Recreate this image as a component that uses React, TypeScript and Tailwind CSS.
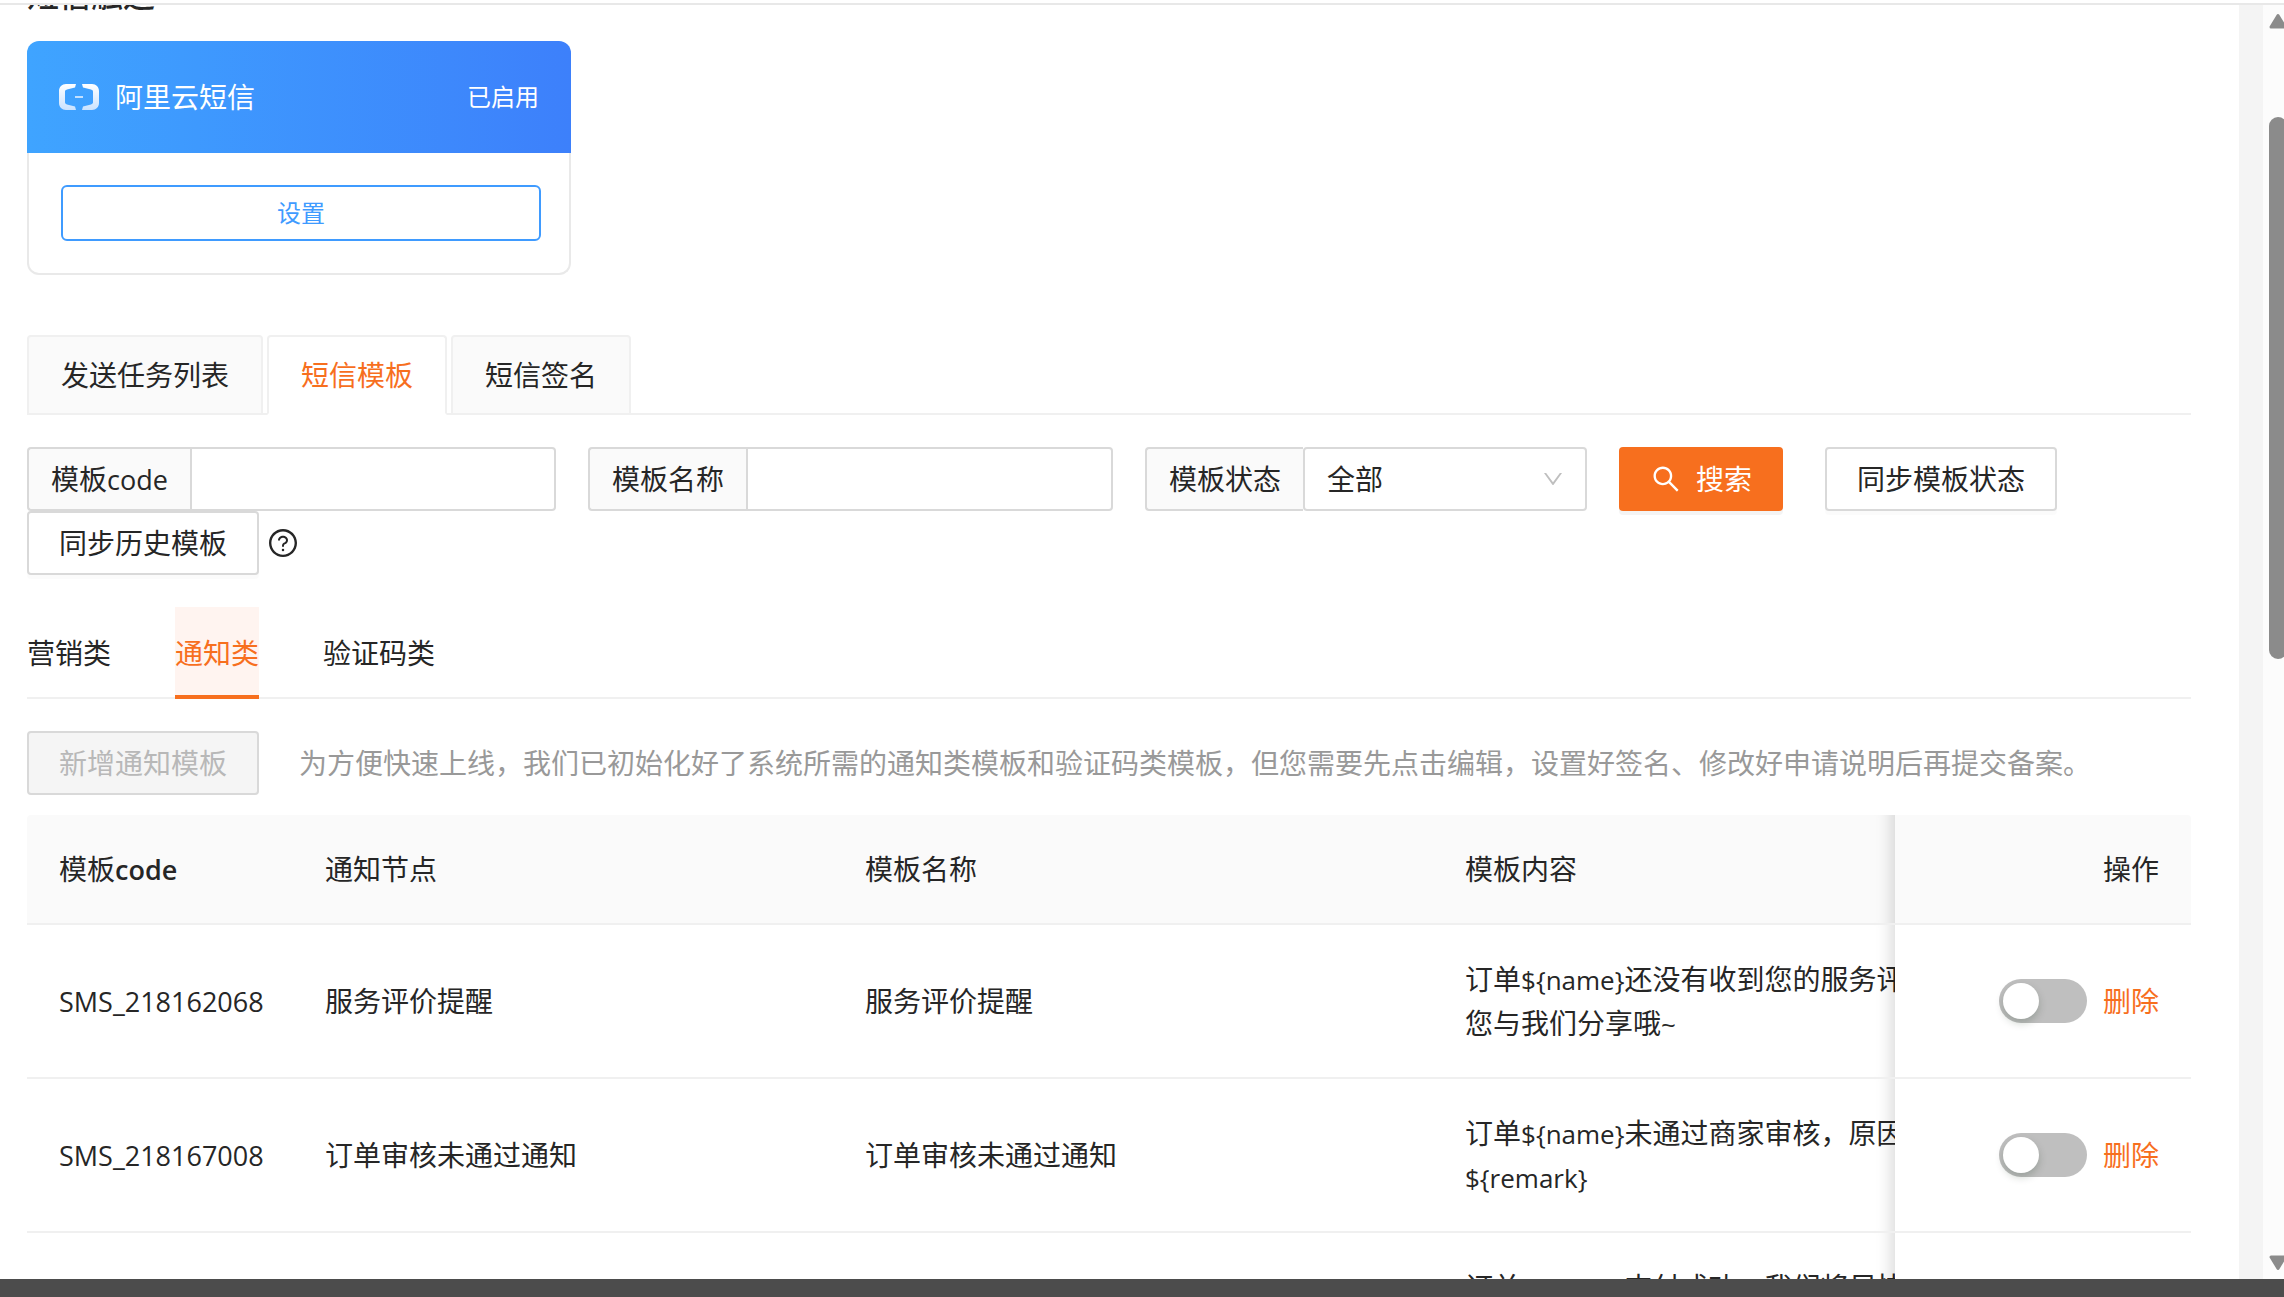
import type { ReactNode } from "react";
import { AiOutlineDown, AiOutlineQuestionCircle, AiOutlineSearch } from "react-icons/ai";

const rows: { code: string; node: string; content: ReactNode }[] = [
  {
    code: "SMS_218162068",
    node: "服务评价提醒",
    content: <>订单<Latin>{"${name}"}</Latin>还没有收到您的服务评价，期待您与我们分享哦<Latin>~</Latin></>,
  },
  {
    code: "SMS_218167008",
    node: "订单审核未通过通知",
    content: <>订单<Latin>{"${name}"}</Latin>未通过商家审核，原因：<Latin>{"${remark}"}</Latin></>,
  },
  {
    code: "SMS_218172031",
    node: "订单支付成功通知",
    content: <>订单<Latin>{"${name}"}</Latin>支付成功，我们将尽快为您安排发货，请您耐心等待</>,
  },
];

function Latin({ children }: { children: ReactNode }) {
  return <span className="text-[26px] leading-none">{children}</span>;
}

function Code({ children }: { children: ReactNode }) {
  return <span className="text-[27px] leading-none">{children}</span>;
}

function AliyunLogo() {
  return (
    <svg width="40" height="26" viewBox="0 0 40 26" aria-hidden="true">
      <defs>
        <linearGradient id="logo-fill" x1="0" y1="0" x2="0" y2="1">
          <stop offset="0" stopColor="#fff" />
          <stop offset="1" stopColor="#c9e2ff" />
        </linearGradient>
      </defs>
      <path
        fill="url(#logo-fill)"
        d="M17 0H7C3 0 0 3 0 7v12c0 4 3 7 7 7h10l-1-3.500-8-2C6.500 20 6 19.500 6 18.300V7.700c0-1.200.5-1.700 2-2.200l8-2zM23 0h10c4 0 7 3 7 7v12c0 4-3 7-7 7H23l1-3.500 8-2c1.500-.5 2-1 2-2.200V7.700c0-1.200-.5-1.700-2-2.200l-8-2z"
      />
      <path fill="#e4f1ff" d="M16 12.200h8v1.600h-8z" />
    </svg>
  );
}

function ProviderCard() {
  return (
    <section className="w-[544px]">
      <div className="flex h-28 items-center rounded-t-xl bg-linear-to-r from-[#3fa4ff] to-[#3d80fb] px-8 text-white">
        <AliyunLogo />
        <span className="ml-4 flex-1">阿里云短信</span>
        <span className="text-2xl">已启用</span>
      </div>
      <div className="rounded-b-xl border-2 border-t-0 border-[#e9e9e9] py-8 pl-8 pr-7">
        <button className="h-14 w-full rounded-md border-2 border-[#3f9bff] text-2xl text-[#3f9bff]">设置</button>
      </div>
    </section>
  );
}

function CardTabs() {
  const base = "h-20 border-2 px-8 rounded-t-sm";
  return (
    <div role="tablist" className="flex gap-1 shadow-[inset_0_-2px_0_#f0f0f0]">
      <button role="tab" className={`${base} border-[#f0f0f0] bg-[#fafafa]`}>发送任务列表</button>
      <button role="tab" aria-selected="true" className={`${base} border-[#f0f0f0] border-b-white bg-white text-[#f76f1e]`}>
        短信模板
      </button>
      <button role="tab" className={`${base} border-[#f0f0f0] bg-[#fafafa]`}>短信签名</button>
    </div>
  );
}

const addon = "flex items-center whitespace-nowrap border-2 border-[#d9d9d9] bg-[#fafafa] px-[22px] rounded-l-sm border-r-0";
const field = "min-w-0 flex-1 border-2 border-[#d9d9d9] bg-white px-[22px] outline-none";
const plainButton = "h-16 rounded-sm border-2 border-[#d9d9d9] bg-white px-[30px] shadow-[0_4px_0_rgba(0,0,0,0.016)]";

function Filters() {
  return (
    <div className="flex flex-wrap gap-x-8">
      <div className="flex h-16 w-[529px]">
        <label htmlFor="code" className={addon}>
          模板<Code>code</Code>
        </label>
        <input id="code" className={`${field} rounded-r-sm`} />
      </div>
      <div className="flex h-16 w-[525px]">
        <label htmlFor="name" className={addon}>模板名称</label>
        <input id="name" className={`${field} rounded-r-sm`} />
      </div>
      <div className="flex h-16 w-[442px]">
        <label htmlFor="status" className={addon}>模板状态</label>
        <div className="relative flex flex-1">
          <select id="status" className={`${field} appearance-none rounded-sm`}>
            <option>全部</option>
          </select>
          <AiOutlineDown className="pointer-events-none absolute right-[22px] top-5 size-6 text-[#bfbfbf]" />
        </div>
      </div>
      <button className="mr-2.5 flex h-16 items-center gap-3.5 rounded-sm bg-[#f76f1e] px-[31px] text-white shadow-[0_4px_0_rgba(0,0,0,0.045)]">
        <AiOutlineSearch className="size-8" />
        搜索
      </button>
      <button className={plainButton}>同步模板状态</button>
      <div className="flex items-center gap-2">
        <button className={plainButton}>同步历史模板</button>
        <button aria-label="帮助">
          <AiOutlineQuestionCircle className="size-8" />
        </button>
      </div>
    </div>
  );
}

function CategoryTabs() {
  const base = "h-[92px] border-b-4 pt-1";
  return (
    <div role="tablist" className="flex gap-16 shadow-[inset_0_-2px_0_#f0f0f0]">
      <button role="tab" className={`${base} border-transparent`}>营销类</button>
      <button role="tab" aria-selected="true" className={`${base} border-[#f76f1e] bg-[#fff4f0] text-[#f76f1e]`}>
        通知类
      </button>
      <button role="tab" className={`${base} border-transparent`}>验证码类</button>
    </div>
  );
}

const head = "border-b-2 border-[#f0f0f0] bg-[#fafafa] px-8 py-8 text-left font-normal";
const cell = "border-b-2 border-[#f0f0f0] bg-white px-8 py-8";
const pinned =
  "sticky right-0 before:pointer-events-none before:absolute before:inset-y-0 before:-left-[60px] before:w-[60px] before:shadow-[inset_-20px_0_16px_-16px_rgba(0,0,0,0.15)]";

function TemplateTable() {
  return (
    <div className="overflow-x-auto rounded-t-sm">
      <table className="w-[2326px] min-w-full table-fixed border-separate border-spacing-0">
        <colgroup>
          <col className="w-[266px]" />
          <col className="w-[540px]" />
          <col className="w-[600px]" />
          <col className="w-[624px]" />
          <col className="w-[296px]" />
        </colgroup>
        <thead>
          <tr>
            <th className={head}>
              模板<span className="text-[27px] font-semibold leading-none">code</span>
            </th>
            <th className={head}>通知节点</th>
            <th className={head}>模板名称</th>
            <th className={head}>模板内容</th>
            <th className={`${head} ${pinned}`}>
              <span className="block text-right">操作</span>
            </th>
          </tr>
        </thead>
        <tbody>
          {rows.map((row) => (
            <tr key={row.code}>
              <td className={cell}><Code>{row.code}</Code></td>
              <td className={cell}>{row.node}</td>
              <td className={cell}>{row.node}</td>
              <td className={cell}>{row.content}</td>
              <td className={`${cell} ${pinned}`}>
                <div className="flex items-center justify-end gap-4">
                  <input
                    type="checkbox"
                    role="switch"
                    aria-label={row.node}
                    className="flex h-11 w-[88px] appearance-none items-center rounded-full bg-[#bfbfbf] px-1 before:size-9 before:rounded-full before:bg-white before:shadow-[0_4px_8px_rgba(0,35,11,0.2)] checked:justify-end checked:bg-[#f76f1e]"
                  />
                  <button className="text-[#f76f1e]">删除</button>
                </div>
              </td>
            </tr>
          ))}
        </tbody>
      </table>
    </div>
  );
}

function ScrollRail() {
  return (
    <div className="flex w-[21px] flex-col overflow-hidden bg-[#fcfcfc] pl-1.5 pt-2">
      <svg width="18" height="16" viewBox="0 0 18 16" className="shrink-0">
        <path d="M9 2.500L16 14H2z" fill="#8b8b8b" stroke="#8b8b8b" strokeWidth="3" strokeLinejoin="round" />
      </svg>
      <div className="flex flex-1 flex-col pb-2 pt-[88px]">
        <div className="h-[47%] w-[18px] rounded-full bg-[#8b8b8b]" />
        <svg width="18" height="16" viewBox="0 0 18 16" className="mt-auto shrink-0">
          <path d="M9 13.500L16 2H2z" fill="#8b8b8b" stroke="#8b8b8b" strokeWidth="3" strokeLinejoin="round" />
        </svg>
      </div>
    </div>
  );
}

export default function App() {
  return (
    <div
      lang="zh-CN"
      className="flex h-screen flex-col bg-white font-['Open_Sans','Noto_Sans_CJK_SC',sans-serif] text-[28px] leading-[44px] text-[#262626]"
    >
      <div className="mt-[3px] h-0.5 shrink-0 bg-[#e8e8e8]" />
      <div className="flex min-h-0 flex-1">
        <main className="min-w-0 flex-1 overflow-hidden pl-[27px] pr-12">
          <h1 className="-mt-8 mb-6 text-[32px] font-medium">短信触达</h1>
          <ProviderCard />
          <div className="mt-[60px]">
            <CardTabs />
          </div>
          <div className="mt-8">
            <Filters />
          </div>
          <div className="mt-8">
            <CategoryTabs />
          </div>
          <div className="mb-5 mt-8 flex items-center gap-10">
            <button disabled className="h-16 rounded-sm border-2 border-[#d9d9d9] bg-[#f5f5f5] px-[30px] text-[#b8b8b8]">
              新增通知模板
            </button>
            <p className="text-[#999]">
              为方便快速上线，我们已初始化好了系统所需的通知类模板和验证码类模板，但您需要先点击编辑，设置好签名、修改好申请说明后再提交备案。
            </p>
          </div>
          <TemplateTable />
        </main>
        <div className="w-6 bg-[#f4f4f4]" />
        <ScrollRail />
      </div>
      <div className="h-[18px] shrink-0 bg-[#4c4c4c]" />
    </div>
  );
}
